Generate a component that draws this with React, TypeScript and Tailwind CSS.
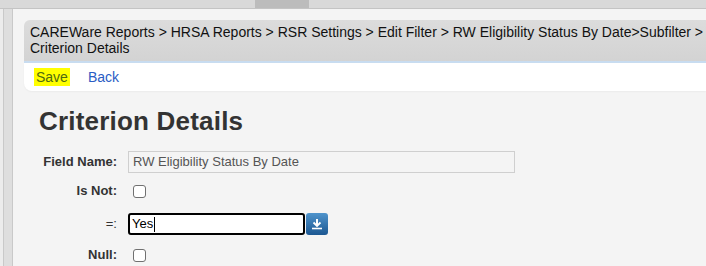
export default function App() {
  const font = { fontFamily: '"Liberation Sans", Arial, sans-serif' };
  return (
    <div className="h-[266px] w-[706px] overflow-hidden bg-[#ececec]" style={font}>
      {/* top strip */}
      <div className="flex h-[9px] border-b border-[#c4c4c4] bg-[#d9d9d9]">
        <div className="w-[255px]" />
        <div className="w-[54px] bg-[#bcbcbc]" />
      </div>
      <div className="flex h-[257px]">
        <div className="w-[3px] bg-[#ececec]" />
        <div className="w-[10px] border-x border-[#c9c9c9] bg-[#dedede]" />
        <div className="flex-1 bg-[#f4f4f4] pl-[11px] pt-[11px]">
          <div className="rounded-tl-[6px] border-b-2 border-[#c8dcf0] bg-gradient-to-b from-[#dcdcdc] to-[#d3d3d3] pb-[5px] pl-[6px] pt-[4px] text-[14px] leading-[16px] whitespace-nowrap text-[#111]">
            <div>
              CAREWare Reports &gt; HRSA Reports &gt; RSR Settings &gt; Edit Filter &gt; RW Eligibility Status By Date&gt;Subfilter &gt;
            </div>
            <div>Criterion Details</div>
          </div>
          <div className="flex h-[28px] items-center gap-[18px] rounded-bl-[8px] bg-white pl-[10px] text-[14px] shadow-[0_1px_2px_rgba(0,0,0,0.04)]">
            <span className="bg-[#ffff00] px-[2px] leading-[18px] text-[#4f6b12]">Save</span>
            <span className="text-[#2a5cc4]">Back</span>
          </div>

          <h1 className="mt-[15px] pl-[15px] text-[26px] font-bold leading-[30px] tracking-[0.2px] text-[#333]">
            Criterion Details
          </h1>

          <div className="mt-[15px] flex flex-col gap-[9px] pl-[15px] text-[13px]">
            <Row label="Field Name:">
              <div className="flex h-[22px] w-[387px] items-center border border-[#cfcfcf] bg-[#f4f4f4] px-[4px] text-[#555]">
                RW Eligibility Status By Date
              </div>
            </Row>
            <Row label="Is Not:" lift>
              <Check />
            </Row>
            <Row label="=:" normal>
              <div className="flex h-[22px] items-center">
                <div className="flex h-[22px] w-[177px] items-center rounded-[3px] border-2 border-black bg-white pl-[2px] text-black">
                  Yes<span className="ml-px h-[15px] w-px bg-black" />
                </div>
                <button className="ml-[1px] flex h-[22px] w-[22px] items-center justify-center rounded-[3px] bg-gradient-to-b from-[#4f94cc] to-[#1b5791]">
                  <svg width="12" height="12" viewBox="0 0 12 12" fill="none" stroke="white">
                    <path d="M6 1v6" strokeWidth="2" />
                    <path d="M2.5 4.5 6 8l3.5-3.5" strokeWidth="1.8" />
                    <path d="M1 10.5h10" strokeWidth="1.6" />
                  </svg>
                </button>
              </div>
            </Row>
            <Row label="Null:">
              <Check />
            </Row>
          </div>
        </div>
      </div>
    </div>
  );
}

function Row({
  label,
  children,
  normal,
  lift,
}: {
  label: string;
  children: React.ReactNode;
  normal?: boolean;
  lift?: boolean;
}) {
  return (
    <div className={`flex h-[22px] items-center gap-[11px] ${lift ? "-mt-[2px] mb-[2px]" : ""}`}>
      <div className={`w-[78px] text-right text-[#333] ${normal ? "font-normal" : "font-bold"}`}>{label}</div>
      {children}
    </div>
  );
}

function Check() {
  return <span className="ml-[5px] block h-[13px] w-[13px] rounded-[3px] border border-[#707070] bg-white" />;
}
